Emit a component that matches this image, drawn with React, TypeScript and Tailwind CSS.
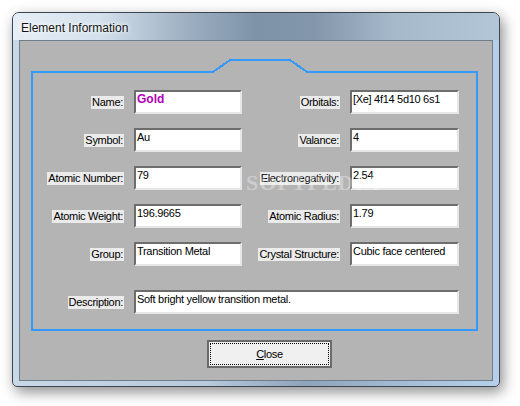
import React from "react";

type Row = { l1: string; v1: string; bold?: boolean; l2: string; v2: string };

const rows: Row[] = [
  { l1: "Name:", v1: "Gold", bold: true, l2: "Orbitals:", v2: "[Xe] 4f14 5d10 6s1" },
  { l1: "Symbol:", v1: "Au", l2: "Valance:", v2: "4" },
  { l1: "Atomic Number:", v1: "79", l2: "Electronegativity:", v2: "2.54" },
  { l1: "Atomic Weight:", v1: "196.9665", l2: "Atomic Radius:", v2: "1.79" },
  { l1: "Group:", v1: "Transition Metal", l2: "Crystal Structure:", v2: "Cubic face centered" },
];

function Label({ text }: { text: string }) {
  return (
    <div className="flex items-center justify-end pr-[10px] h-[24px] text-[11px] leading-[13px]">
      <span className="bg-[#ebebeb] px-[1px] leading-[13px] text-[11px] tracking-[-0.3px] text-black whitespace-nowrap">
        {text}
      </span>
    </div>
  );
}

function Field({ value, bold }: { value: string; bold?: boolean }) {
  return (
    <div
      className={
        bold
          ? "h-[24px] bg-white border-2 border-t-[#6d6d6d] border-l-[#6d6d6d] border-b-[#e6e6e6] border-r-[#e6e6e6] pl-[1px] pt-[1px] overflow-hidden whitespace-nowrap text-[12px] leading-[13px] font-bold text-[#b000b8]"
          : "h-[24px] bg-white border-2 border-t-[#6d6d6d] border-l-[#6d6d6d] border-b-[#e6e6e6] border-r-[#e6e6e6] pl-[1px] pt-[1px] overflow-hidden whitespace-nowrap text-[11px] leading-[13px] tracking-[-0.3px] text-black"
      }
    >
      {value}
    </div>
  );
}

export default function App() {
  return (
    <div className="w-[520px] h-[406px] bg-white pt-[12px] pl-[12px] overflow-hidden [font-family:'Liberation_Sans',Arial,sans-serif]">
      <div className="w-[488px] h-[375px] flex flex-col rounded-t-[7px] rounded-b-[5px] border border-[#3c4650] shadow-[3px_5px_14px_rgba(0,0,0,0.45)] bg-[linear-gradient(to_right,#c9d8e7_0%,#b7c9db_40%,#8ea4ba_60%,#a9c2da_85%,#b7d0ea_100%)]">
        {/* title bar */}
        <div className="h-[27px] shrink-0 rounded-t-[6px] bg-[linear-gradient(to_right,#e6eef6_0%,#d3e0ec_18%,#9fb1c3_35%,#7e93a8_50%,#8396aa_62%,#a6b9cb_78%,#b3c6d8_100%)] flex items-center pl-[8px] pt-[2px]">
          <span className="text-[12px] text-[#141414] [text-shadow:0_0_6px_#ffffff,0_0_3px_#ffffff]">
            Element Information
          </span>
        </div>
        {/* client */}
        <div className="relative mx-[6px] mb-[5px] flex-1 bg-[#b4b4b4] border border-[#6f7c89] flex flex-col pl-[11px] pt-[18px] overflow-hidden">
          <div className="relative w-[447px] h-[272px] shrink-0 pl-[3px] pt-[31px]">
            <svg
              className="absolute inset-0"
              width="447"
              height="272"
              viewBox="0 0 447 272"
              shapeRendering="crispEdges"
            >
              <path
                d="M1 13 L182 13 L199 1 L259 1 L276 13 L446 13 L446 271 L1 271 Z"
                fill="none"
                stroke="#3399ff"
                strokeWidth="2"
              />
            </svg>
            <div className="relative grid grid-cols-[100px_108px_108px_109px] gap-y-[14px]">
              {rows.map((r) => (
                <React.Fragment key={r.l1}>
                  <Label text={r.l1} />
                  <Field value={r.v1} bold={r.bold} />
                  <Label text={r.l2} />
                  <Field value={r.v2} />
                </React.Fragment>
              ))}
              <div className="mt-[10px]">
                <Label text="Description:" />
              </div>
              <div className="mt-[10px] col-span-3">
                <Field value="Soft bright yellow transition metal." />
              </div>
            </div>
          </div>
          <div className="mt-[9px] ml-[176px] w-[125px] h-[28px] shrink-0 border-2 border-[#6a6a6a] bg-[#f0f0f0] p-[1px]">
            <div className="w-full h-full border border-dotted border-black flex items-center justify-center text-[11px] leading-[13px]">
              <span className="text-[11px] tracking-[-0.3px] text-black leading-[13px]">
                <span className="underline">C</span>lose
              </span>
            </div>
          </div>
          {/* watermark overlay */}
          <div className="absolute left-[226px] top-[130px] flex flex-col items-center pointer-events-none">
            <span className="text-[22px] font-bold tracking-[1px] text-white/35 [font-family:'Liberation_Serif',serif] leading-[24px]">
              SOFTPEDIA
            </span>
          </div>
        </div>
      </div>
    </div>
  );
}
